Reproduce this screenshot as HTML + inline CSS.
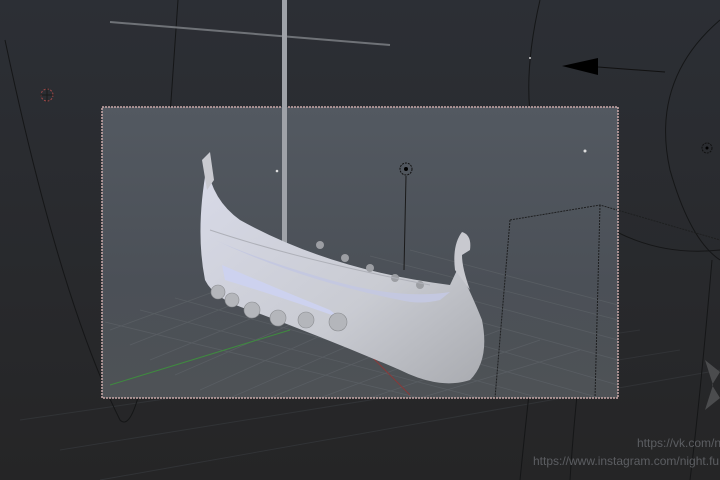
<!DOCTYPE html>
<html><head><meta charset="utf-8"><style>
html,body{margin:0;padding:0;width:720px;height:480px;overflow:hidden;background:#28292c}
svg{display:block}
.t{font-family:"Liberation Sans",sans-serif;font-size:12px;fill:#5c5e62}
</style></head><body>
<svg width="720" height="480" viewBox="0 0 720 480" xmlns="http://www.w3.org/2000/svg">
<defs>
<linearGradient id="bg" x1="0" y1="0" x2="0" y2="1"><stop offset="0" stop-color="#2c2f35"/><stop offset="1" stop-color="#252526"/></linearGradient>
<linearGradient id="in" x1="0" y1="0" x2="0" y2="1"><stop offset="0" stop-color="#535961"/><stop offset="0.6" stop-color="#4b5057"/><stop offset="1" stop-color="#4e5256"/></linearGradient>
<linearGradient id="hull" x1="0" y1="0" x2="1" y2="1"><stop offset="0" stop-color="#d8dae8"/><stop offset="0.6" stop-color="#c9cbd2"/><stop offset="1" stop-color="#a9abb0"/></linearGradient>
</defs>
<rect width="720" height="480" fill="url(#bg)"/>
<g stroke="#313336" stroke-width="1" fill="none">
<path d="M20 420 L640 330 M60 450 L680 350 M100 480 L720 370"/>
</g>
<g stroke="#151617" stroke-width="1" fill="none">
<path d="M5 40 Q60 300 120 420 Q140 440 160 260 Q170 120 178 0"/>
<path d="M540 0 Q510 130 560 190 Q630 260 720 250"/>
<path d="M720 20 Q650 80 670 170 Q690 240 720 260"/>
<path d="M520 480 Q530 380 540 300"/>
<path d="M570 480 Q575 400 590 280"/>
<path d="M690 480 Q700 400 712 260"/>
</g>
<rect x="102" y="107" width="516" height="291" fill="url(#in)"/>
<g stroke="#5c6166" stroke-width="0.8" fill="none" opacity="0.8">
<path d="M110 330 L300 260 M130 345 L320 270 M150 360 L345 280 M175 375 L370 290 M200 390 L400 300 M230 398 L430 310 M270 398 L460 320 M320 398 L500 330 M370 398 L540 340 M420 398 L580 350"/>
<path d="M105 322 L420 398 M140 310 L480 398 M175 298 L540 398 M210 288 L600 398 M250 278 L618 385 M290 270 L618 360 M330 262 L618 340 M370 256 L618 320 M410 250 L618 305"/>
</g>
<path d="M110 385 L290 330" stroke="#3f8a3f" stroke-width="1"/>
<path d="M370 355 L410 395" stroke="#8a3838" stroke-width="1"/>
<path d="M510 220 L600 205 L720 240 M510 220 L495 398 M600 205 L595 398" stroke="#1e1f20" stroke-dasharray="2 1" fill="none"/>
<rect x="102" y="107" width="516" height="291" fill="none" stroke="#c9a9a9" stroke-width="1.5" stroke-dasharray="2 1"/>
<path d="M110 22 L390 45" stroke="#6f7277" stroke-width="2"/>
<rect x="282" y="0" width="5" height="310" fill="#9fa2a8"/>
<path d="M207 165 Q212 200 240 220 Q330 270 450 285 L458 268 Q470 290 482 320 Q490 360 470 380 Q440 390 400 370 Q330 340 250 310 Q215 300 205 280 Q195 230 207 165 Z" fill="url(#hull)"/>
<path d="M215 240 Q300 280 400 300 Q420 305 440 300 L450 292 Q400 300 330 280 Q260 260 215 240 Z" fill="#c4c8e0"/>
<path d="M222 265 Q280 290 330 310 L340 318 Q290 300 225 280 Z" fill="#cdd2ef"/>
<path d="M455 270 Q452 245 462 232 Q472 235 470 250 L462 255 Q462 268 470 290 Z" fill="#c8c9cf"/>
<path d="M202 160 L210 152 L214 180 L207 190 Z" fill="#c9cad0"/>
<g fill="#b4b6bb" stroke="#8a8c90" stroke-width="0.6">
<circle cx="218" cy="292" r="7"/><circle cx="232" cy="300" r="7"/><circle cx="252" cy="310" r="8"/>
<circle cx="278" cy="318" r="8"/><circle cx="306" cy="320" r="8"/><circle cx="338" cy="322" r="9"/>
</g>
<g fill="#9c9ea3"><circle cx="320" cy="245" r="4"/><circle cx="345" cy="258" r="4"/><circle cx="370" cy="268" r="4"/><circle cx="395" cy="278" r="4"/><circle cx="420" cy="285" r="4"/></g>
<path d="M210 230 Q300 260 430 285" stroke="#aeb0b8" fill="none"/>
<circle cx="406" cy="169" r="6" fill="none" stroke="#111" stroke-dasharray="2 1"/>
<circle cx="406" cy="169" r="2" fill="#000"/>
<path d="M406 176 L404 270" stroke="#1a1a1a"/>
<circle cx="277" cy="171" r="1.3" fill="#ddd"/><circle cx="585" cy="151" r="1.5" fill="#ddd"/>
<circle cx="530" cy="58" r="1" fill="#ccc"/>
<circle cx="47" cy="95" r="6" fill="none" stroke="#a04848" stroke-dasharray="2 1.5"/>
<path d="M40 95 L54 95 M47 88 L47 102" stroke="#1a1a1a"/>
<path d="M562 66 L598 58 L598 75 Z" fill="#000"/>
<path d="M598 67 L665 72" stroke="#111"/>
<circle cx="707" cy="148" r="5" fill="none" stroke="#111" stroke-dasharray="2 1"/><circle cx="707" cy="148" r="1.5" fill="#000"/>
<path d="M705 360 L720 372 L712 385 L720 398 L705 410 L713 385 Z" fill="#4b4c4e"/>
<text class="t" x="637" y="447">https://vk.com/n</text>
<text class="t" x="533" y="465">https://www.instagram.com/night.fu</text>
</svg>
</body></html>
